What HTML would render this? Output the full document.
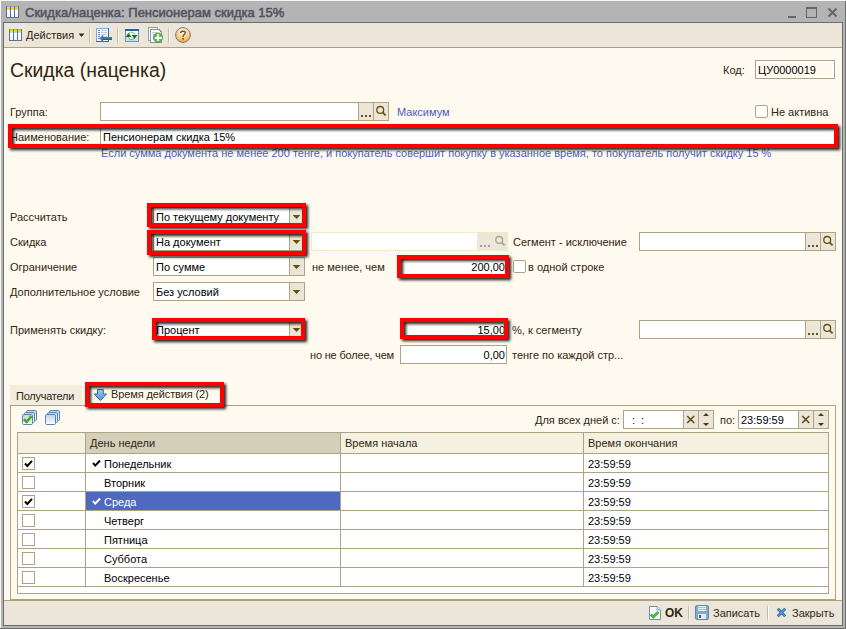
<!DOCTYPE html><html><head><meta charset="utf-8"><style>
html,body{margin:0;padding:0}
body{width:846px;height:629px;position:relative;overflow:hidden;background:#f6f6f6;font-family:"Liberation Sans",sans-serif}
.t{position:absolute;white-space:nowrap;font-family:"Liberation Sans",sans-serif;font-size:11px}
.rb{position:absolute;border:4px solid #ff0000;filter:drop-shadow(2.5px 2.5px 1.5px rgba(0,0,0,0.9))}
</style></head><body>
<div style="position:absolute;left:1px;top:1px;width:844px;height:627px;background:#b4b4b4;"></div>
<div style="position:absolute;left:845px;top:1px;width:1px;height:628px;background:#6e6e6e;"></div>
<div style="position:absolute;left:0px;top:628px;width:846px;height:1px;background:#6e6e6e;"></div>
<div style="position:absolute;left:3px;top:22px;width:838px;height:602px;border:1px solid #6d6d6d;background:#fffaf0;"></div>
<div class="t" style="left:25px;top:5px;line-height:15px;font-size:13px;color:#52525c;-webkit-text-stroke:0.5px #52525c;">Скидка/наценка: Пенсионерам скидка 15%</div>
<div style="position:absolute;left:788px;top:16px;width:8px;height:2px;background:#666;"></div>
<div style="position:absolute;left:806px;top:7px;width:9px;height:8px;border:1px solid #666;border-top-width:2px;"></div>
<svg style="position:absolute;left:827px;top:7px" width="11" height="11" viewBox="0 0 11 11"><path d="M1.5 1.5 L9.5 9.5 M9.5 1.5 L1.5 9.5" stroke="#666" stroke-width="2"/></svg>
<div style="position:absolute;left:4px;top:23px;width:838px;height:24px;background:#ebe5da;"></div>
<div style="position:absolute;left:4px;top:47px;width:838px;height:1px;background:#aca27c;"></div>
<div style="position:absolute;left:4px;top:600px;width:838px;height:1px;background:#aca27c;"></div>
<div style="position:absolute;left:4px;top:601px;width:838px;height:24px;background:#ebe5da;"></div>
<svg style="position:absolute;left:6px;top:6px" width="13" height="12" viewBox="0 0 13 12"><defs><linearGradient id="cg" x1="0" y1="0" x2="0" y2="1"><stop offset="0" stop-color="#ffffff"/><stop offset="1" stop-color="#dff4fb"/></linearGradient></defs><g shape-rendering="crispEdges"><rect x="0" y="0" width="13" height="12" rx="1" fill="#5f7385"/><rect x="1" y="0" width="3" height="1" fill="#9fb3c8"/><rect x="1" y="1" width="3" height="2" fill="#f6d21a"/><rect x="1" y="3" width="3" height="1" fill="#c4d8ee"/><rect x="1" y="4" width="3" height="7" fill="url(#cg)"/><rect x="5" y="0" width="3" height="1" fill="#9fb3c8"/><rect x="5" y="1" width="3" height="2" fill="#f6d21a"/><rect x="5" y="3" width="3" height="1" fill="#c4d8ee"/><rect x="5" y="4" width="3" height="7" fill="url(#cg)"/><rect x="9" y="0" width="3" height="1" fill="#9fb3c8"/><rect x="9" y="1" width="3" height="2" fill="#f6d21a"/><rect x="9" y="3" width="3" height="1" fill="#c4d8ee"/><rect x="9" y="4" width="3" height="7" fill="url(#cg)"/></g></svg>
<svg style="position:absolute;left:9px;top:29px" width="13" height="12" viewBox="0 0 13 12"><defs><linearGradient id="cg" x1="0" y1="0" x2="0" y2="1"><stop offset="0" stop-color="#ffffff"/><stop offset="1" stop-color="#dff4fb"/></linearGradient></defs><g shape-rendering="crispEdges"><rect x="0" y="0" width="13" height="12" rx="1" fill="#5f7385"/><rect x="1" y="0" width="3" height="1" fill="#9fb3c8"/><rect x="1" y="1" width="3" height="2" fill="#f6d21a"/><rect x="1" y="3" width="3" height="1" fill="#c4d8ee"/><rect x="1" y="4" width="3" height="7" fill="url(#cg)"/><rect x="5" y="0" width="3" height="1" fill="#9fb3c8"/><rect x="5" y="1" width="3" height="2" fill="#f6d21a"/><rect x="5" y="3" width="3" height="1" fill="#c4d8ee"/><rect x="5" y="4" width="3" height="7" fill="url(#cg)"/><rect x="9" y="0" width="3" height="1" fill="#9fb3c8"/><rect x="9" y="1" width="3" height="2" fill="#f6d21a"/><rect x="9" y="3" width="3" height="1" fill="#c4d8ee"/><rect x="9" y="4" width="3" height="7" fill="url(#cg)"/></g></svg>
<div class="t" style="left:26px;top:29px;line-height:13px;font-size:11px;font-weight:normal;color:#30250f;">Действия</div>
<svg style="position:absolute;left:78px;top:33px" width="8" height="5" viewBox="0 0 8 5"><path d="M0.5 0.5 L6.5 0.5 L3.5 4 Z" fill="#3b2e14"/></svg>
<div style="position:absolute;left:89px;top:26px;width:1px;height:19px;background:linear-gradient(rgba(196,186,150,0),#c4ba96 25%,#c4ba96 75%,rgba(196,186,150,0));"></div>
<div style="position:absolute;left:90px;top:26px;width:1px;height:19px;background:linear-gradient(rgba(255,255,255,0),#fdfcf8 25%,#fdfcf8 75%,rgba(255,255,255,0));"></div>
<svg style="position:absolute;left:96px;top:28px" width="17" height="16" viewBox="0 0 17 16"><g shape-rendering="crispEdges"><rect x="0" y="0" width="13" height="14" fill="#3f6a92"/><rect x="0" y="0" width="12" height="13" fill="#86a8ca"/><rect x="1" y="1" width="11" height="12" fill="#f4f9fe"/><rect x="2" y="2" width="2" height="1" fill="#5a8ac0"/><rect x="5" y="2" width="6" height="1" fill="#c6c9cc"/><rect x="2" y="4" width="2" height="1" fill="#5a8ac0"/><rect x="5" y="4" width="6" height="1" fill="#c6c9cc"/><rect x="2" y="6" width="2" height="1" fill="#5a8ac0"/><rect x="5" y="6" width="6" height="1" fill="#c6c9cc"/><rect x="2" y="8" width="2" height="1" fill="#5a8ac0"/><rect x="5" y="8" width="6" height="1" fill="#c6c9cc"/><rect x="2" y="10" width="2" height="1" fill="#5a8ac0"/><rect x="5" y="10" width="6" height="1" fill="#c6c9cc"/></g><path d="M3.6 10.4 L7.2 6.6 L7.2 9 L16 9 L16 12 L7.2 12 L7.2 14.6 Z" fill="#3a78b0"/><rect x="7" y="11" width="9" height="1" fill="#2a5e90"/></svg>
<div style="position:absolute;left:117px;top:26px;width:1px;height:19px;background:linear-gradient(rgba(196,186,150,0),#c4ba96 25%,#c4ba96 75%,rgba(196,186,150,0));"></div>
<div style="position:absolute;left:118px;top:26px;width:1px;height:19px;background:linear-gradient(rgba(255,255,255,0),#fdfcf8 25%,#fdfcf8 75%,rgba(255,255,255,0));"></div>
<svg style="position:absolute;left:125px;top:29px" width="14" height="13" viewBox="0 0 14 13"><defs><linearGradient id="wg" x1="0" y1="0" x2="0" y2="1"><stop offset="0" stop-color="#ffffff"/><stop offset="1" stop-color="#c8dcee"/></linearGradient></defs><g shape-rendering="crispEdges"><rect x="0" y="0" width="14" height="13" fill="#7890a6"/><rect x="1" y="2" width="12" height="10" fill="url(#wg)"/><rect x="0" y="0" width="14" height="2" fill="#2b6092"/></g><circle cx="6.5" cy="6.9" r="3.7" fill="none" stroke="#3c983c" stroke-width="1" stroke-dasharray="1.2 0.6"/><path d="M0.6 8 L6.4 8 L3.5 4 Z" fill="#1d741d"/><path d="M6.6 6 L12.4 6 L9.5 10 Z" fill="#1d741d"/></svg>
<svg style="position:absolute;left:147px;top:26px" width="17" height="18" viewBox="0 0 17 18"><g shape-rendering="crispEdges"><rect x="1" y="1" width="10" height="14" fill="#8aa0b8"/><rect x="2" y="2" width="8" height="12" fill="#fbfdff"/><path d="M3 3 H12 L15 6 V17 H3 Z" fill="#7f96ae"/><path d="M4 4 H11.5 L14 6.5 V16 H4 Z" fill="#ffffff"/><rect x="5" y="6" width="5" height="1" fill="#c8ccd0"/><rect x="5" y="8" width="3" height="1" fill="#c8ccd0"/></g><circle cx="11" cy="11.6" r="4.6" fill="#66bb52" stroke="#4c9a3e" stroke-width="0.9"/><g shape-rendering="crispEdges"><rect x="10" y="8" width="2" height="7" fill="#fff"/><rect x="7.5" y="10.5" width="7" height="2" fill="#fff"/></g></svg>
<div style="position:absolute;left:168px;top:26px;width:1px;height:19px;background:linear-gradient(rgba(196,186,150,0),#c4ba96 25%,#c4ba96 75%,rgba(196,186,150,0));"></div>
<div style="position:absolute;left:169px;top:26px;width:1px;height:19px;background:linear-gradient(rgba(255,255,255,0),#fdfcf8 25%,#fdfcf8 75%,rgba(255,255,255,0));"></div>
<svg style="position:absolute;left:174px;top:26px" width="18" height="18" viewBox="0 0 18 18"><defs><radialGradient id="hg" cx="0.5" cy="0.3" r="0.7"><stop offset="0" stop-color="#fffaf0"/><stop offset="0.5" stop-color="#fad8a0"/><stop offset="1" stop-color="#f0a040"/></radialGradient></defs><circle cx="9" cy="9" r="7.4" fill="url(#hg)" stroke="#76706a" stroke-width="0.9"/><path d="M6.7 7 Q6.7 5.2 9 5.2 Q11.3 5.2 11.3 7 Q11.3 8.1 9.9 8.8 Q9.1 9.3 9.1 11" fill="none" stroke="#7a4a1c" stroke-width="1.35"/><rect x="8.2" y="12.2" width="1.8" height="1.4" fill="#7a4a1c"/></svg>
<div class="t" style="left:10px;top:59px;line-height:22px;font-size:19px;font-weight:normal;color:#30250f;font-size:19.4px;">Скидка (наценка)</div>
<div class="t" style="left:723px;top:64px;line-height:13px;font-size:11px;font-weight:normal;color:#30250f;">Код:</div>
<div style="position:absolute;left:755px;top:60px;width:78px;height:17px;background:#ffffff;border:1px solid #aca482;"></div>
<div style="position:absolute;left:758px;top:63px;width:74px;height:13px;background:#fffaf0;"></div>
<div class="t" style="left:758px;top:64px;line-height:13px;font-size:11px;font-weight:normal;color:#000000;">ЦУ0000019</div>
<div class="t" style="left:10px;top:106px;line-height:13px;font-size:11px;font-weight:normal;color:#30250f;">Группа:</div>
<div style="position:absolute;left:100px;top:102px;width:287px;height:17px;background:#fff;border:1px solid #aca482;"></div>
<div style="position:absolute;left:358px;top:102px;width:14px;height:17px;background:#ebe6d8;border:1px solid #aca482;"></div>
<div style="position:absolute;left:373px;top:102px;width:14px;height:17px;background:#ebe6d8;border:1px solid #aca482;"></div>
<svg style="position:absolute;left:358px;top:102px" width="16" height="19" viewBox="0 0 16 19"><rect x="3" y="13" width="2" height="2" fill="#685214"/><rect x="7" y="13" width="2" height="2" fill="#685214"/><rect x="11" y="13" width="2" height="2" fill="#685214"/></svg>
<svg style="position:absolute;left:373px;top:102px" width="16" height="19" viewBox="0 0 16 19"><circle cx="7.2" cy="7.9" r="3.4" fill="none" stroke="#685214" stroke-width="1.3"/><line x1="9.6" y1="10.3" x2="12.6" y2="13.3" stroke="#685214" stroke-width="1.9"/></svg>
<div class="t" style="left:397px;top:106px;line-height:13px;font-size:11px;font-weight:normal;color:#4a5cc4;">Максимум</div>
<div style="position:absolute;left:755px;top:105px;width:11px;height:11px;border:1px solid #aca482;border-radius:2px;background:#fff;"></div>
<div class="t" style="left:771px;top:106px;line-height:13px;font-size:11px;font-weight:normal;color:#30250f;">Не активна</div>
<div class="t" style="left:10px;top:131px;line-height:13px;font-size:11px;font-weight:normal;color:#30250f;">Наименование:</div>
<div style="position:absolute;left:100px;top:127px;width:734px;height:17px;background:#fff;border:1px solid #aca482;"></div>
<div class="t" style="left:103px;top:131px;line-height:13px;font-size:11px;font-weight:normal;color:#000000;">Пенсионерам скидка 15%</div>
<div class="t" style="left:101px;top:147px;line-height:13px;font-size:11px;font-weight:normal;color:#4a5cc4;">Если сумма документа не менее 200 тенге, и покупатель совершит покупку в указанное время, то покупатель получит скидку 15 %</div>
<div class="t" style="left:10px;top:211px;line-height:13px;font-size:11px;font-weight:normal;color:#30250f;">Рассчитать</div>
<div style="position:absolute;left:153px;top:207px;width:150px;height:17px;background:#fff;border:1px solid #aca482;"></div>
<div style="position:absolute;left:289px;top:207px;width:14px;height:17px;background:#ebe6d8;border:1px solid #aca482;"></div>
<svg style="position:absolute;left:289px;top:207px" width="16" height="19" viewBox="0 0 16 19"><path d="M3.6 8 L11.4 8 L7.5 12 Z" fill="#66500f"/></svg>
<div class="t" style="left:156px;top:211px;line-height:13px;font-size:11px;font-weight:normal;color:#000000;">По текущему документу</div>
<div class="t" style="left:10px;top:236px;line-height:13px;font-size:11px;font-weight:normal;color:#30250f;">Скидка</div>
<div style="position:absolute;left:153px;top:232px;width:150px;height:17px;background:#fff;border:1px solid #aca482;"></div>
<div style="position:absolute;left:289px;top:232px;width:14px;height:17px;background:#ebe6d8;border:1px solid #aca482;"></div>
<svg style="position:absolute;left:289px;top:232px" width="16" height="19" viewBox="0 0 16 19"><path d="M3.6 8 L11.4 8 L7.5 12 Z" fill="#66500f"/></svg>
<div class="t" style="left:156px;top:236px;line-height:13px;font-size:11px;font-weight:normal;color:#000000;">На документ</div>
<div style="position:absolute;left:311px;top:232px;width:195px;height:17px;background:#fff;border:1px solid #f3e9c2;"></div>
<div style="position:absolute;left:477px;top:232px;width:14px;height:17px;background:#ece7dc;border:1px solid #f3e9c2;"></div>
<div style="position:absolute;left:492px;top:232px;width:14px;height:17px;background:#ece7dc;border:1px solid #f3e9c2;"></div>
<svg style="position:absolute;left:477px;top:232px" width="16" height="19" viewBox="0 0 16 19"><rect x="3" y="13" width="2" height="2" fill="#a8a290"/><rect x="7" y="13" width="2" height="2" fill="#a8a290"/><rect x="11" y="13" width="2" height="2" fill="#a8a290"/></svg>
<svg style="position:absolute;left:492px;top:232px" width="16" height="19" viewBox="0 0 16 19"><circle cx="7.2" cy="7.9" r="3.4" fill="none" stroke="#a8a290" stroke-width="1.3"/><line x1="9.6" y1="10.3" x2="12.6" y2="13.3" stroke="#a8a290" stroke-width="1.9"/></svg>
<div class="t" style="left:513px;top:236px;line-height:13px;font-size:11px;font-weight:normal;color:#30250f;">Сегмент - исключение</div>
<div style="position:absolute;left:639px;top:232px;width:195px;height:17px;background:#fff;border:1px solid #aca482;"></div>
<div style="position:absolute;left:805px;top:232px;width:14px;height:17px;background:#ebe6d8;border:1px solid #aca482;"></div>
<div style="position:absolute;left:820px;top:232px;width:14px;height:17px;background:#ebe6d8;border:1px solid #aca482;"></div>
<svg style="position:absolute;left:805px;top:232px" width="16" height="19" viewBox="0 0 16 19"><rect x="3" y="13" width="2" height="2" fill="#685214"/><rect x="7" y="13" width="2" height="2" fill="#685214"/><rect x="11" y="13" width="2" height="2" fill="#685214"/></svg>
<svg style="position:absolute;left:820px;top:232px" width="16" height="19" viewBox="0 0 16 19"><circle cx="7.2" cy="7.9" r="3.4" fill="none" stroke="#685214" stroke-width="1.3"/><line x1="9.6" y1="10.3" x2="12.6" y2="13.3" stroke="#685214" stroke-width="1.9"/></svg>
<div class="t" style="left:10px;top:261px;line-height:13px;font-size:11px;font-weight:normal;color:#30250f;">Ограничение</div>
<div style="position:absolute;left:153px;top:257px;width:150px;height:17px;background:#fff;border:1px solid #aca482;"></div>
<div style="position:absolute;left:289px;top:257px;width:14px;height:17px;background:#ebe6d8;border:1px solid #aca482;"></div>
<svg style="position:absolute;left:289px;top:257px" width="16" height="19" viewBox="0 0 16 19"><path d="M3.6 8 L11.4 8 L7.5 12 Z" fill="#66500f"/></svg>
<div class="t" style="left:156px;top:261px;line-height:13px;font-size:11px;font-weight:normal;color:#000000;">По сумме</div>
<div class="t" style="left:312px;top:261px;line-height:13px;font-size:11px;font-weight:normal;color:#30250f;">не менее, чем</div>
<div style="position:absolute;left:400px;top:257px;width:105px;height:17px;background:#fff;border:1px solid #aca482;"></div>
<div class="t" style="right:341px;top:261px;line-height:13px;color:#000000;text-align:right;">200,00</div>
<div style="position:absolute;left:513px;top:260px;width:11px;height:11px;border:1px solid #aca482;border-radius:2px;background:#fff;"></div>
<div class="t" style="left:528px;top:261px;line-height:13px;font-size:11px;font-weight:normal;color:#30250f;">в одной строке</div>
<div class="t" style="left:10px;top:286px;line-height:13px;font-size:11px;font-weight:normal;color:#30250f;">Дополнительное условие</div>
<div style="position:absolute;left:153px;top:282px;width:150px;height:17px;background:#fff;border:1px solid #aca482;"></div>
<div style="position:absolute;left:289px;top:282px;width:14px;height:17px;background:#ebe6d8;border:1px solid #aca482;"></div>
<svg style="position:absolute;left:289px;top:282px" width="16" height="19" viewBox="0 0 16 19"><path d="M3.6 8 L11.4 8 L7.5 12 Z" fill="#66500f"/></svg>
<div class="t" style="left:156px;top:286px;line-height:13px;font-size:11px;font-weight:normal;color:#000000;">Без условий</div>
<div class="t" style="left:10px;top:324px;line-height:13px;font-size:11px;font-weight:normal;color:#30250f;">Применять скидку:</div>
<div style="position:absolute;left:153px;top:320px;width:150px;height:17px;background:#fff;border:1px solid #aca482;"></div>
<div style="position:absolute;left:289px;top:320px;width:14px;height:17px;background:#ebe6d8;border:1px solid #aca482;"></div>
<svg style="position:absolute;left:289px;top:320px" width="16" height="19" viewBox="0 0 16 19"><path d="M3.6 8 L11.4 8 L7.5 12 Z" fill="#66500f"/></svg>
<div class="t" style="left:156px;top:324px;line-height:13px;font-size:11px;font-weight:normal;color:#000000;">Процент</div>
<div style="position:absolute;left:400px;top:320px;width:105px;height:17px;background:#fff;border:1px solid #aca482;"></div>
<div class="t" style="right:341px;top:324px;line-height:13px;color:#000000;text-align:right;">15,00</div>
<div class="t" style="left:512px;top:324px;line-height:13px;font-size:11px;font-weight:normal;color:#30250f;">%, к сегменту</div>
<div style="position:absolute;left:639px;top:320px;width:195px;height:17px;background:#fff;border:1px solid #aca482;"></div>
<div style="position:absolute;left:805px;top:320px;width:14px;height:17px;background:#ebe6d8;border:1px solid #aca482;"></div>
<div style="position:absolute;left:820px;top:320px;width:14px;height:17px;background:#ebe6d8;border:1px solid #aca482;"></div>
<svg style="position:absolute;left:805px;top:320px" width="16" height="19" viewBox="0 0 16 19"><rect x="3" y="13" width="2" height="2" fill="#685214"/><rect x="7" y="13" width="2" height="2" fill="#685214"/><rect x="11" y="13" width="2" height="2" fill="#685214"/></svg>
<svg style="position:absolute;left:820px;top:320px" width="16" height="19" viewBox="0 0 16 19"><circle cx="7.2" cy="7.9" r="3.4" fill="none" stroke="#685214" stroke-width="1.3"/><line x1="9.6" y1="10.3" x2="12.6" y2="13.3" stroke="#685214" stroke-width="1.9"/></svg>
<div class="t" style="left:310px;top:349px;line-height:13px;font-size:11px;font-weight:normal;color:#30250f;letter-spacing:-0.18px;">но не более, чем</div>
<div style="position:absolute;left:400px;top:345px;width:105px;height:17px;background:#fff;border:1px solid #aca482;"></div>
<div class="t" style="right:341px;top:349px;line-height:13px;color:#000000;text-align:right;">0,00</div>
<div class="t" style="left:512px;top:349px;line-height:13px;font-size:11px;font-weight:normal;color:#30250f;">тенге по каждой стр...</div>
<div style="position:absolute;left:10px;top:385px;width:70px;height:19px;background:#f1ede2;border:1px solid #f6eecb;border-bottom:none;"></div>
<div class="t" style="left:16px;top:390px;line-height:13px;font-size:11px;font-weight:normal;color:#30250f;letter-spacing:-0.25px;">Получатели</div>
<svg style="position:absolute;left:93px;top:389px" width="15" height="13" viewBox="0 0 15 13"><defs><linearGradient id="ag" x1="0" y1="0" x2="0" y2="1"><stop offset="0" stop-color="#9ccdf2"/><stop offset="1" stop-color="#4c9ad6"/></linearGradient></defs><path d="M4.5 0.5 L10.3 0.5 L10.3 5 L13.6 5 L7.4 11.5 L1.2 5 L4.5 5 Z" fill="url(#ag)" stroke="#3a6898" stroke-width="1"/></svg>
<div class="t" style="left:111px;top:388px;line-height:13px;font-size:11px;font-weight:normal;color:#30250f;letter-spacing:-0.12px;">Время действия (2)</div>
<div style="position:absolute;left:10px;top:405px;width:824px;height:193px;border:1px solid #aca482;border-bottom:1px solid #aca27c;"></div>
<svg style="position:absolute;left:22px;top:410px" width="16" height="16" viewBox="0 0 16 16"><defs><linearGradient id="sg" x1="0" y1="0" x2="0" y2="1"><stop offset="0" stop-color="#c0d2e6"/><stop offset="1" stop-color="#ffffff"/></linearGradient></defs><rect x="4.5" y="0.5" width="10" height="10" rx="1.2" fill="url(#sg)" stroke="#5a84aa"/><rect x="2.5" y="2.5" width="10" height="10" rx="1.2" fill="url(#sg)" stroke="#5a84aa"/><rect x="0.5" y="4.5" width="10" height="10" rx="1.2" fill="url(#sg)" stroke="#5a84aa"/><path d="M1.8 9.2 L4.6 11.8 L9.6 6.2" fill="none" stroke="#46a82c" stroke-width="2.6"/></svg>
<svg style="position:absolute;left:45px;top:410px" width="16" height="16" viewBox="0 0 16 16"><defs><linearGradient id="sg" x1="0" y1="0" x2="0" y2="1"><stop offset="0" stop-color="#c0d2e6"/><stop offset="1" stop-color="#ffffff"/></linearGradient></defs><rect x="4.5" y="0.5" width="10" height="10" rx="1.2" fill="url(#sg)" stroke="#5a84aa"/><rect x="2.5" y="2.5" width="10" height="10" rx="1.2" fill="url(#sg)" stroke="#5a84aa"/><rect x="0.5" y="4.5" width="10" height="10" rx="1.2" fill="url(#sg)" stroke="#5a84aa"/></svg>
<div class="t" style="left:535px;top:414px;line-height:13px;font-size:11px;font-weight:normal;color:#30250f;">Для всех дней с:</div>
<div style="position:absolute;left:623px;top:410px;width:89px;height:17px;background:#fff;border:1px solid #aca482;"></div>
<div style="position:absolute;left:683px;top:410px;width:14px;height:17px;background:#ebe6d8;border:1px solid #aca482;"></div>
<div style="position:absolute;left:698px;top:410px;width:14px;height:17px;background:#ebe6d8;border:1px solid #aca482;"></div>
<svg style="position:absolute;left:683px;top:410px" width="16" height="19" viewBox="0 0 16 19"><path d="M4.2 6 L11.2 13 M11.2 6 L4.2 13" stroke="#5a4a14" stroke-width="1.5"/></svg>
<svg style="position:absolute;left:698px;top:410px" width="16" height="19" viewBox="0 0 16 19"><path d="M5 6 L11 6 L8 3 Z M5 13 L11 13 L8 16 Z" fill="#4a3a10"/></svg>
<div class="t" style="left:626px;top:414px;line-height:13px;font-size:11px;font-weight:normal;color:#000000;"></div>
<div class="t" style="left:632px;top:414px;line-height:13px;font-size:11px;font-weight:normal;color:#000000;">:</div>
<div class="t" style="left:641px;top:414px;line-height:13px;font-size:11px;font-weight:normal;color:#000000;">:</div>
<div class="t" style="left:720px;top:414px;line-height:13px;font-size:11px;font-weight:normal;color:#30250f;">по:</div>
<div style="position:absolute;left:738px;top:410px;width:89px;height:17px;background:#fff;border:1px solid #aca482;"></div>
<div style="position:absolute;left:798px;top:410px;width:14px;height:17px;background:#ebe6d8;border:1px solid #aca482;"></div>
<div style="position:absolute;left:813px;top:410px;width:14px;height:17px;background:#ebe6d8;border:1px solid #aca482;"></div>
<svg style="position:absolute;left:798px;top:410px" width="16" height="19" viewBox="0 0 16 19"><path d="M4.2 6 L11.2 13 M11.2 6 L4.2 13" stroke="#5a4a14" stroke-width="1.5"/></svg>
<svg style="position:absolute;left:813px;top:410px" width="16" height="19" viewBox="0 0 16 19"><path d="M5 6 L11 6 L8 3 Z M5 13 L11 13 L8 16 Z" fill="#4a3a10"/></svg>
<div class="t" style="left:741px;top:414px;line-height:13px;font-size:11px;font-weight:normal;color:#000000;">23:59:59</div>
<div style="position:absolute;left:17px;top:432px;width:810px;height:160px;border:1px solid #aca482;background:#fff;"></div>
<div style="position:absolute;left:18px;top:433px;width:67px;height:20px;background:#f4f1e1;"></div>
<div style="position:absolute;left:86px;top:433px;width:254px;height:20px;background:#d3cfba;"></div>
<div style="position:absolute;left:341px;top:433px;width:242px;height:20px;background:#f4f1e1;"></div>
<div style="position:absolute;left:584px;top:433px;width:244px;height:20px;background:#f4f1e1;"></div>
<div style="position:absolute;left:18px;top:453px;width:810px;height:1px;background:#aca482;"></div>
<div style="position:absolute;left:85px;top:433px;width:1px;height:153px;background:#aca482;"></div>
<div style="position:absolute;left:340px;top:433px;width:1px;height:153px;background:#aca482;"></div>
<div style="position:absolute;left:583px;top:433px;width:1px;height:153px;background:#aca482;"></div>
<div class="t" style="left:90px;top:437px;line-height:13px;font-size:11px;font-weight:normal;color:#30250f;">День недели</div>
<div class="t" style="left:345px;top:437px;line-height:13px;font-size:11px;font-weight:normal;color:#30250f;">Время начала</div>
<div class="t" style="left:588px;top:437px;line-height:13px;font-size:11px;font-weight:normal;color:#30250f;">Время окончания</div>
<div style="position:absolute;left:18px;top:472px;width:810px;height:1px;background:#aca482;"></div>
<div style="position:absolute;left:22px;top:457px;width:11px;height:11px;border:1px solid #aca482;background:#fff;"></div>
<svg style="position:absolute;left:22px;top:457px" width="13" height="13" viewBox="0 0 13 13"><path d="M3 6.5 L5.3 9 L10 3.8" fill="none" stroke="#000" stroke-width="2"/></svg>
<svg style="position:absolute;left:91px;top:458px" width="11" height="10" viewBox="0 0 11 10"><path d="M2 5 L4.3 7.6 L9 2.5" fill="none" stroke="#000" stroke-width="2"/></svg>
<div class="t" style="left:104px;top:458px;line-height:13px;font-size:11px;font-weight:normal;color:#000000;">Понедельник</div>
<div class="t" style="left:588px;top:458px;line-height:13px;font-size:11px;font-weight:normal;color:#000000;">23:59:59</div>
<div style="position:absolute;left:18px;top:491px;width:810px;height:1px;background:#aca482;"></div>
<div style="position:absolute;left:22px;top:476px;width:11px;height:11px;border:1px solid #aca482;background:#fff;"></div>
<div class="t" style="left:104px;top:477px;line-height:13px;font-size:11px;font-weight:normal;color:#000000;">Вторник</div>
<div class="t" style="left:588px;top:477px;line-height:13px;font-size:11px;font-weight:normal;color:#000000;">23:59:59</div>
<div style="position:absolute;left:18px;top:510px;width:810px;height:1px;background:#aca482;"></div>
<div style="position:absolute;left:86px;top:492px;width:254px;height:18px;background:#5068c0;"></div>
<div style="position:absolute;left:22px;top:495px;width:11px;height:11px;border:1px solid #aca482;background:#fff;"></div>
<svg style="position:absolute;left:22px;top:495px" width="13" height="13" viewBox="0 0 13 13"><path d="M3 6.5 L5.3 9 L10 3.8" fill="none" stroke="#000" stroke-width="2"/></svg>
<svg style="position:absolute;left:91px;top:496px" width="11" height="10" viewBox="0 0 11 10"><path d="M2 5 L4.3 7.6 L9 2.5" fill="none" stroke="#fff" stroke-width="2"/></svg>
<div class="t" style="left:104px;top:496px;line-height:13px;font-size:11px;font-weight:normal;color:#fff;">Среда</div>
<div class="t" style="left:588px;top:496px;line-height:13px;font-size:11px;font-weight:normal;color:#000000;">23:59:59</div>
<div style="position:absolute;left:18px;top:529px;width:810px;height:1px;background:#aca482;"></div>
<div style="position:absolute;left:22px;top:514px;width:11px;height:11px;border:1px solid #aca482;background:#fff;"></div>
<div class="t" style="left:104px;top:515px;line-height:13px;font-size:11px;font-weight:normal;color:#000000;">Четверг</div>
<div class="t" style="left:588px;top:515px;line-height:13px;font-size:11px;font-weight:normal;color:#000000;">23:59:59</div>
<div style="position:absolute;left:18px;top:548px;width:810px;height:1px;background:#aca482;"></div>
<div style="position:absolute;left:22px;top:533px;width:11px;height:11px;border:1px solid #aca482;background:#fff;"></div>
<div class="t" style="left:104px;top:534px;line-height:13px;font-size:11px;font-weight:normal;color:#000000;">Пятница</div>
<div class="t" style="left:588px;top:534px;line-height:13px;font-size:11px;font-weight:normal;color:#000000;">23:59:59</div>
<div style="position:absolute;left:18px;top:567px;width:810px;height:1px;background:#aca482;"></div>
<div style="position:absolute;left:22px;top:552px;width:11px;height:11px;border:1px solid #aca482;background:#fff;"></div>
<div class="t" style="left:104px;top:553px;line-height:13px;font-size:11px;font-weight:normal;color:#000000;">Суббота</div>
<div class="t" style="left:588px;top:553px;line-height:13px;font-size:11px;font-weight:normal;color:#000000;">23:59:59</div>
<div style="position:absolute;left:18px;top:586px;width:810px;height:1px;background:#aca482;"></div>
<div style="position:absolute;left:22px;top:571px;width:11px;height:11px;border:1px solid #aca482;background:#fff;"></div>
<div class="t" style="left:104px;top:572px;line-height:13px;font-size:11px;font-weight:normal;color:#000000;">Воскресенье</div>
<div class="t" style="left:588px;top:572px;line-height:13px;font-size:11px;font-weight:normal;color:#000000;">23:59:59</div>
<div class="rb" style="left:8px;top:124px;width:822px;height:16px;"></div>
<div class="rb" style="left:147px;top:203px;width:151px;height:16px;"></div>
<div class="rb" style="left:147px;top:230px;width:151px;height:17px;"></div>
<div class="rb" style="left:397px;top:255px;width:104px;height:15px;"></div>
<div class="rb" style="left:152px;top:318px;width:145px;height:14px;"></div>
<div class="rb" style="left:400px;top:318px;width:100px;height:13px;"></div>
<div class="rb" style="left:85px;top:382px;width:131px;height:17px;"></div>
<svg style="position:absolute;left:648px;top:605px" width="15" height="16" viewBox="0 0 15 16"><path d="M1.5 1.5 L9 1.5 L12.5 5 L12.5 14.5 L1.5 14.5 Z" fill="#f6f9fd" stroke="#6f8fb2"/><path d="M9 1.5 L9 5 L12.5 5" fill="#dde8f4" stroke="#8aa6c4"/><path d="M2.8 9.5 L5.3 12 L10.3 7" fill="none" stroke="#3f9a2a" stroke-width="2.6"/><path d="M2.8 9.5 L5.3 12 L10.3 7" fill="none" stroke="#62c23e" stroke-width="1.2"/></svg>
<div class="t" style="left:665px;top:606px;line-height:14px;font-size:12px;font-weight:bold;color:#30250f;">OK</div>
<div style="position:absolute;left:688px;top:604px;width:1px;height:18px;background:linear-gradient(rgba(196,186,150,0),#c4ba96 25%,#c4ba96 75%,rgba(196,186,150,0));"></div>
<div style="position:absolute;left:689px;top:604px;width:1px;height:18px;background:linear-gradient(rgba(255,255,255,0),#fdfcf8 25%,#fdfcf8 75%,rgba(255,255,255,0));"></div>
<svg style="position:absolute;left:695px;top:605px" width="15" height="15" viewBox="0 0 15 15"><rect x="0.5" y="0.5" width="13" height="14" rx="1.5" fill="#86aacb" stroke="#6088ae"/><g shape-rendering="crispEdges"><rect x="3" y="1" width="8" height="5" fill="#eef5fb"/><rect x="3" y="2" width="8" height="1" fill="#a8c4de"/><rect x="3" y="4" width="8" height="1" fill="#a8c4de"/><rect x="3" y="9" width="8" height="5" fill="#e8e8e8"/><rect x="4" y="10" width="2" height="3" fill="#4a6078"/></g></svg>
<div class="t" style="left:713px;top:607px;line-height:13px;font-size:11px;font-weight:normal;color:#30250f;">Записать</div>
<div style="position:absolute;left:767px;top:604px;width:1px;height:18px;background:linear-gradient(rgba(196,186,150,0),#c4ba96 25%,#c4ba96 75%,rgba(196,186,150,0));"></div>
<div style="position:absolute;left:768px;top:604px;width:1px;height:18px;background:linear-gradient(rgba(255,255,255,0),#fdfcf8 25%,#fdfcf8 75%,rgba(255,255,255,0));"></div>
<svg style="position:absolute;left:776px;top:607px" width="11" height="11" viewBox="0 0 11 11"><path d="M1.8 1.8 L9.2 9.2 M9.2 1.8 L1.8 9.2" stroke="#2f6eaa" stroke-width="2.8"/><path d="M2.2 2.2 L8.8 8.8 M8.8 2.2 L2.2 8.8" stroke="#5a9ad2" stroke-width="1.1"/></svg>
<div class="t" style="left:792px;top:607px;line-height:13px;font-size:11px;font-weight:normal;color:#30250f;">Закрыть</div>
</body></html>
